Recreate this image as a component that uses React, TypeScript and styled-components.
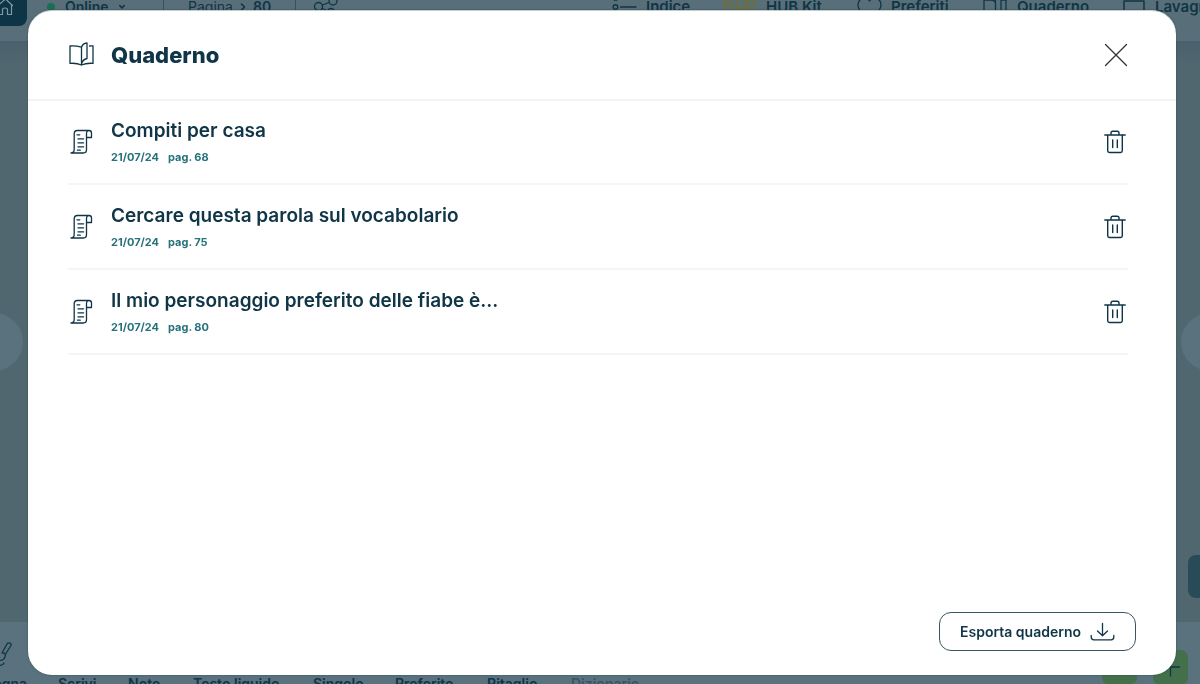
import React from 'react';
import styled, { createGlobalStyle } from 'styled-components';

const ink = '#0f3547';

const Global = createGlobalStyle`
  *, *::before, *::after { box-sizing: border-box; }
  body { margin: 0; overflow: hidden; background: #50676f; font-family: Inter, "Liberation Sans", sans-serif; color: ${ink}; }
  button { font: inherit; color: inherit; background: none; border: 0; padding: 0; }
  h1, h2, p, ul { margin: 0; padding: 0; }
  svg { display: block; flex: none; fill: none; stroke: currentColor; stroke-linecap: round; stroke-linejoin: round; }
`;

const Page = styled.div`
  height: 100vh;
  display: flex;
  flex-direction: column;
  overflow: hidden;
`;
const TopBar = styled.header`
  flex: none;
  height: 41px;
  display: flex;
  align-items: flex-start;
  background: #586f79;
  font-size: 14px;
  font-weight: 600;
  line-height: 14px;
  white-space: nowrap;
`;
const HomeButton = styled.button`
  width: 27px;
  height: 26px;
  border-radius: 0 0 8px 0;
  background: #0e3546;
  color: #8199a6;
`;
const TopGroup = styled.div<{ $width: number; $pad: number; $gap: number; $rule?: boolean }>`
  width: ${(p) => p.$width}px;
  height: 14px;
  padding-left: ${(p) => p.$pad}px;
  display: flex;
  align-items: center;
  gap: ${(p) => p.$gap}px;
  border-right: ${(p) => (p.$rule ? '1px solid #34535f' : '0')};
`;
const Dot = styled.span`
  width: 8px;
  height: 8px;
  border-radius: 50%;
  background: #1a6e53;
`;
const Light = styled.span`
  font-weight: 400;
`;
const TopNav = styled.nav`
  display: flex;
  margin-left: auto;
  margin-right: -16px;
`;
const NavButton = styled.button<{ $width: number }>`
  width: ${(p) => p.$width}px;
  height: 14px;
  display: flex;
  align-items: center;
  gap: 9px;
  font-size: 15px;
  line-height: 14px;
`;
const Stage = styled.main`
  flex: 1;
  display: grid;
  grid-template-columns: 23px 1fr 19px;
  align-items: center;
  background: linear-gradient(#4a616d, #50676f 24px);
  overflow: hidden;
`;
const Arrow = styled.button<{ $side: 'left' | 'right' }>`
  width: 58px;
  height: 58px;
  border-radius: 50%;
  background: #5a727e;
  margin-top: 20px;
  margin-left: ${(p) => (p.$side === 'left' ? '-35px' : '0')};
  grid-column: ${(p) => (p.$side === 'left' ? 1 : 3)};
  grid-row: 1;
`;
const SideTab = styled.button`
  grid-column: 3;
  grid-row: 1;
  align-self: end;
  width: 20px;
  height: 43px;
  margin: 0 0 24px 7px;
  border-radius: 8px;
  background: #294b58;
`;
const Tools = styled.footer`
  flex: none;
  height: 62px;
  display: flex;
  align-items: flex-end;
  background: #5a717e;
  font-size: 14px;
  font-weight: 600;
  line-height: 16px;
  white-space: nowrap;
`;
const Tool = styled.button<{ $width: number; $muted?: boolean }>`
  width: ${(p) => p.$width}px;
  height: 8px;
  text-align: left;
  opacity: ${(p) => (p.$muted ? 0.45 : 1)};
`;
const FirstTool = styled(Tool)`
  height: 43px;
  display: flex;
  flex-direction: column;
  justify-content: space-between;
  margin-left: -28px;
`;
const ToolIcon = styled.span`
  padding-left: 6px;
`;
const ToolLabel = styled.span`
  height: 8px;
`;
const GreenGroup = styled.div`
  margin-left: auto;
  margin-right: 12px;
  display: flex;
  gap: 16px;
`;
const GreenButton = styled.button`
  width: 35px;
  height: 34px;
  border-radius: 8px 8px 6px 6px;
  background: #436f4b;
`;

const Dialog = styled.section`
  position: fixed;
  inset: 10px 24px 9px 28px;
  display: flex;
  flex-direction: column;
  background: #fff;
  border-radius: 24px;
  border-top: 1px solid #c3cbcf;
  box-shadow: 0 0 2px rgba(20, 50, 60, 0.5);
`;
const DialogHeader = styled.header`
  height: 90px;
  flex: none;
  display: flex;
  align-items: center;
  gap: 16px;
  padding: 0 48px 0 40px;
  border-bottom: 2px solid #f2f4f4;
`;
const Title = styled.h1`
  flex: 1;
  font-size: 22px;
  line-height: 28px;
  font-weight: 800;
`;
const IconButton = styled.button`
  display: flex;
  width: 24px;
`;
const Notes = styled.ul`
  flex: 1;
  list-style: none;
  margin-top: -1px;
  padding: 0 48px 0 40px;
`;
const Note = styled.li`
  height: 85px;
  display: flex;
  align-items: center;
  gap: 16px;
  border-bottom: 2px solid #f4f6f6;
`;
const NoteText = styled.div`
  flex: 1;
`;
const NoteTitle = styled.h2`
  font-size: 19px;
  line-height: 24px;
  font-weight: 600;
`;
const Meta = styled.p`
  display: flex;
  gap: 9px;
  margin-top: 6px;
  font-size: 11px;
  line-height: 16px;
  font-weight: 700;
  color: #27717c;
`;
const DialogFooter = styled.footer`
  display: flex;
  justify-content: flex-end;
  padding: 0 40px 24px;
`;
const ExportButton = styled.button`
  height: 39px;
  display: flex;
  align-items: center;
  gap: 9px;
  padding: 0 20px;
  border: 1px solid #3a5563;
  border-radius: 12px;
  font-size: 14px;
  font-weight: 600;
`;

const BookIcon = () => (
  <svg width="27" height="26" viewBox="0 0 27 26" strokeWidth="1.3">
    <path d="M13.5 5.2C10 4.200 6 3.600 2 4v17.400c4-.4 8 .1 11.500 1.600M13.500 5.200v17.800M13.500 5.200c.8-2.400 2.800-4 5.500-4.200v15.500c-2.800.6-4.800 2.500-5.500 5.500M21.500 4c1.200-.1 2.300-.1 3.500 0v17.400c-4-.4-8 .1-11.500 1.600" />
  </svg>
);
const ScrollIcon = () => (
  <svg width="27" height="26" viewBox="0 0 27 26" strokeWidth="1.3">
    <path d="M21 1.500H9.300C7.200 1.500 6.200 2.700 6.200 4.800V20.500c0 2-1 3.300-3.200 3.500h12.200c2.300 0 3.300-1.200 3.300-3.200V4.500c0-1.800.9-3 2.500-3s2.500 1 2.500 2.600v4.400h-5" />
    <path d="M9 5.800h2.800M10 9.800h5.600M10 13.800h5.600M10 17.800h5.600M9.500 21.200h2.800" />
  </svg>
);
const TrashIcon = () => (
  <svg width="22" height="24" viewBox="0 0 22 24" strokeWidth="1.4">
    <path d="M.8 5h20.400M3.700 5v15.800c0 1 .7 1.700 1.700 1.700h11.200c1 0 1.700-.7 1.700-1.700V5M7 5V3.200C7 2 7.700 1.300 8.800 1.300h4.400c1.100 0 1.800.7 1.800 1.900V5M8.700 10v7.500M13.300 10v7.500" />
  </svg>
);
const CloseIcon = () => (
  <svg width="24" height="24" viewBox="0 0 24 24" strokeWidth="1.3" color="#333">
    <path d="M1.500 1.500l21 21M22.500 1.500l-21 21" />
  </svg>
);
const DownloadIcon = () => (
  <svg width="25" height="20" viewBox="0 0 25 20" strokeWidth="1.3">
    <path d="M12.500 1.500v12M7.500 9l5 4.700 5-4.700M1.200 13.500v1.600c0 1.800 1 2.700 2.700 2.700h17.200c1.700 0 2.700-.9 2.700-2.700v-1.600" />
  </svg>
);
const Chevron = ({ right }: { right?: boolean }) => (
  <svg width="6" height="8" viewBox="0 0 6 8" strokeWidth="1.6">
    <path d={right ? 'M1.5 1l3 3-3 3' : 'M.8 2.600L3 5l2.200-2.400'} />
  </svg>
);

const notes = [
  { title: 'Compiti per casa', date: '21/07/24', page: 'pag. 68' },
  { title: 'Cercare questa parola sul vocabolario', date: '21/07/24', page: 'pag. 75' },
  { title: 'Il mio personaggio preferito delle fiabe è...', date: '21/07/24', page: 'pag. 80' },
];
const tools = [
  { label: 'Scrivi', width: 70 },
  { label: 'Note', width: 65 },
  { label: 'Testo liquido', width: 120 },
  { label: 'Singolo', width: 82 },
  { label: 'Preferito', width: 92 },
  { label: 'Ritaglio', width: 84 },
  { label: 'Dizionario', width: 80, muted: true },
];

export default function App() {
  return (
    <>
      <Global />
      <Page aria-hidden="true">
        <TopBar>
          <HomeButton aria-label="Home">
            <svg width="27" height="26" viewBox="0 0 27 26" strokeWidth="1.2">
              <path d="M-2 5.500L5.500-1l7 6.500M-1 4v10.500h3.500V9.500c0-2 5-2 5 0v5h4V4.500" />
            </svg>
          </HomeButton>
          <TopGroup $width={137} $pad={20} $gap={10} $rule>
            <Dot />
            Online
            <Chevron />
          </TopGroup>
          <TopGroup $width={132} $pad={24} $gap={7} $rule>
            <Light>Pagina</Light>
            <Chevron right />
            80
          </TopGroup>
          <TopGroup $width={60} $pad={17} $gap={0}>
            <svg width="26" height="14" viewBox="0 0 26 14" strokeWidth="1.3">
              <circle cx="5.5" cy="6.5" r="4" />
              <circle cx="20" cy="1" r="4" />
              <circle cx="18" cy="12" r="3.5" />
              <path d="M9.500 5l6.500-2.500M9 8.500l6 2.500" />
            </svg>
          </TopGroup>
          <TopNav>
            <NavButton $width={111}>
              <svg width="25" height="14" viewBox="0 0 25 14" strokeWidth="1.4">
                <path d="M8.500 7H24M2 0h3" />
                <circle cx="3.5" cy="7" r="2.3" />
              </svg>
              Indice
            </NavButton>
            <NavButton $width={134}>
              <svg width="34" height="14" viewBox="0 0 34 14" strokeWidth="3" color="#686e49">
                <path d="M2-2v12M2 6c0-4 8-4 8 0v4M14 1v4c0 5 8 5 8 0V1M22 6v4" />
                <circle cx="28" cy="4" r="4" />
              </svg>
              HUB Kit
            </NavButton>
            <NavButton $width={126}>
              <svg width="25" height="14" viewBox="0 0 25 14" strokeWidth="1.3">
                <path d="M12.500 1C9-4 1-2 1 5c0 4 2 6 5 9M12.500 1C16-4 24-2 24 5c0 4-2 6-5 9" />
              </svg>
              Preferiti
            </NavButton>
            <NavButton $width={140}>
              <svg width="25" height="14" viewBox="0 0 25 14" strokeWidth="1.3">
                <path d="M1 14V0h7c2 0 4 1 4.500 3v11M12.500 2V-1M18-1v15M18 0h5v14" />
              </svg>
              Quaderno
            </NavButton>
            <NavButton $width={93}>
              <svg width="23" height="14" viewBox="0 0 23 14" strokeWidth="1.5">
                <path d="M1 14V1h20v13" />
              </svg>
              Lavagna
            </NavButton>
          </TopNav>
        </TopBar>
        <Stage>
          <Arrow $side="left" aria-label="Pagina precedente" />
          <Arrow $side="right" aria-label="Pagina successiva" />
          <SideTab aria-label="Pannello laterale" />
        </Stage>
        <Tools>
          <FirstTool $width={86}>
            <ToolIcon>
              <svg width="34" height="26" viewBox="0 0 34 26" strokeWidth="1.3">
                <path d="M24 12l5-9c1-2 5-1 4 1.500l-6 9.500M24 12c3-.5 4 1 3 4s-4 4-6 3M20 24c3 1 5 0 6-2" />
              </svg>
            </ToolIcon>
            <ToolLabel>Disegna</ToolLabel>
          </FirstTool>
          {tools.map((t) => (
            <Tool key={t.label} $width={t.width} $muted={t.muted}>
              {t.label}
            </Tool>
          ))}
          <GreenGroup>
            <GreenButton aria-label="Riduci" />
            <GreenButton aria-label="Aggiungi">
              <svg width="35" height="34" viewBox="0 0 35 34" strokeWidth="1.3">
                <path d="M17.500 26v-9M17.500 17h9" />
              </svg>
            </GreenButton>
          </GreenGroup>
        </Tools>
      </Page>
      <Dialog role="dialog" aria-labelledby="dialog-title">
        <DialogHeader>
          <BookIcon />
          <Title id="dialog-title">Quaderno</Title>
          <IconButton aria-label="Chiudi">
            <CloseIcon />
          </IconButton>
        </DialogHeader>
        <Notes>
          {notes.map((n) => (
            <Note key={n.title}>
              <ScrollIcon />
              <NoteText>
                <NoteTitle>{n.title}</NoteTitle>
                <Meta>
                  <span>{n.date}</span>
                  <span>{n.page}</span>
                </Meta>
              </NoteText>
              <IconButton aria-label={`Elimina ${n.title}`}>
                <TrashIcon />
              </IconButton>
            </Note>
          ))}
        </Notes>
        <DialogFooter>
          <ExportButton>
            Esporta quaderno
            <DownloadIcon />
          </ExportButton>
        </DialogFooter>
      </Dialog>
    </>
  );
}
